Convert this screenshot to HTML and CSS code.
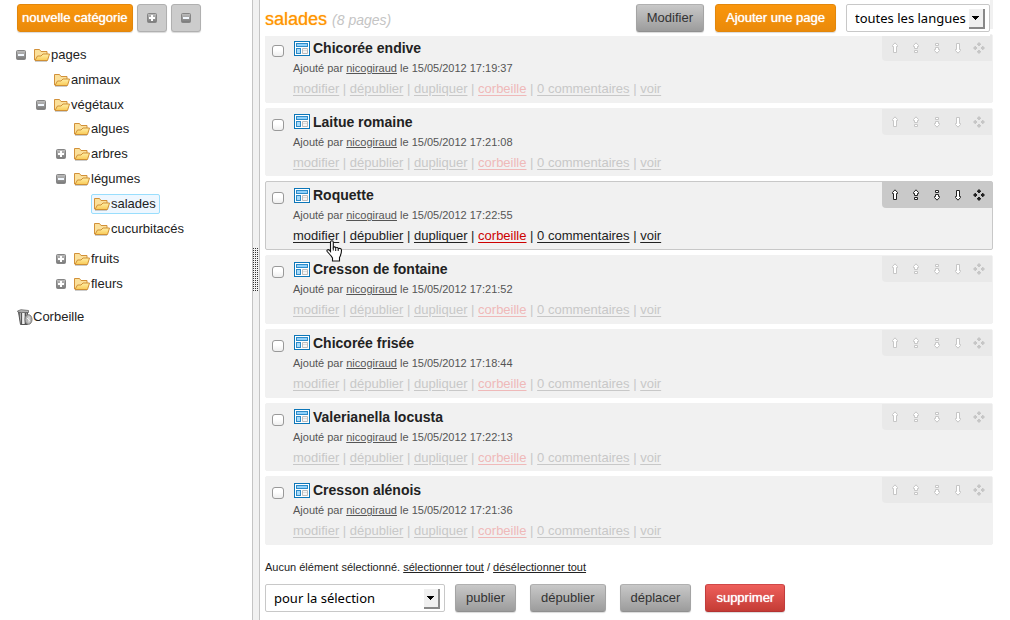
FILE: index.html
```html
<!DOCTYPE html>
<html lang="fr">
<head>
<meta charset="utf-8">
<title>Pages - salades</title>
<link rel="stylesheet" href="styles.css">
</head>
<body>
<svg class="sprite" aria-hidden="true">
  <defs>
    <linearGradient id="g-folder" x1="0" y1="0" x2="0" y2="1"><stop offset="0" stop-color="#fff0a8"/><stop offset="1" stop-color="#f9c955"/></linearGradient>
    <linearGradient id="g-toggle" x1="0" y1="0" x2="0" y2="1"><stop offset="0" stop-color="#c0c0c0"/><stop offset="1" stop-color="#777"/></linearGradient>
    <linearGradient id="g-bin" x1="0" y1="0" x2="1" y2="0"><stop offset="0" stop-color="#444"/><stop offset=".35" stop-color="#eee"/><stop offset="1" stop-color="#888"/></linearGradient>
  </defs>
  <symbol id="folder" viewBox="0 0 16 14">
    <path d="M.5 12V1.500h5l1.500 2h6V6" fill="#fbe09a" stroke="#d2913a"/>
    <path d="M1 12.500 3.500 8H7l2-2h6.500l-2 6.500z" fill="url(#g-folder)" stroke="#cf9036"/>
    <path d="M1 13.500h12" stroke="#aaa" stroke-opacity=".6"/>
  </symbol>
  <symbol id="plus" viewBox="0 0 10 10">
    <rect x=".5" y=".5" width="9" height="9" rx="1" fill="url(#g-toggle)" stroke="#858585"/>
    <path d="M4 2h2v2h2v2H6v2H4V6H2V4h2z" fill="#fff"/>
  </symbol>
  <symbol id="minus" viewBox="0 0 10 10">
    <rect x=".5" y=".5" width="9" height="9" rx="1" fill="url(#g-toggle)" stroke="#858585"/>
    <path d="M2 4h6v2H2z" fill="#f2f8ff"/>
  </symbol>
  <symbol id="bin" viewBox="0 0 16 16">
    <path d="M1.500 3h9v12.500h-7z" fill="url(#g-bin)" stroke="#555"/>
    <path d="M4.500 4v11M8.500 4v11" stroke="#555"/>
    <path d="M6.500 4v11" stroke="#eee"/>
    <path d="M.5 2 4 .7l7.500.8v2L1 3.200z" fill="#bbb" stroke="#555" stroke-width=".7"/>
    <ellipse cx="11.500" cy="10.500" rx="3.500" ry="4.800" fill="#b5b5b5" stroke="#777"/>
    <path d="M12 7.500v6M10 9l3 3" stroke="#eee"/>
  </symbol>
  <symbol id="page" viewBox="0 0 16 15">
    <rect x=".5" y=".5" width="15" height="14" fill="#fff" stroke="#0c76b8"/>
    <rect x="2.500" y="2.500" width="11" height="3" fill="#8fd0fa" stroke="#2d8bc8"/>
    <rect x="2.500" y="7.500" width="4" height="5" fill="#a5dafa" stroke="#2d8bc8"/>
    <path d="M8.500 7.500h5v5h-5z" fill="#f6f6f6" stroke="#bbb"/>
    <path d="M9 9.500h4" stroke="#ddd"/>
  </symbol>
  <symbol id="up" viewBox="0 0 12 12">
    <path d="M6 .8 8.500 3.500v1h-1v6h-3v-6h-1v-1z" fill="#fff" stroke="currentColor"/>
  </symbol>
  <symbol id="top" viewBox="0 0 12 12">
    <path d="M6 .8 8.500 3.500v1h-1v2h-3v-2h-1v-1zM4.500 8.500h3v2h-3z" fill="#fff" stroke="currentColor"/>
  </symbol>
  <symbol id="bottom" viewBox="0 0 12 12">
    <path d="M6 11.200 8.500 8.500v-1h-1v-2h-3v2h-1v1zM4.500 1.500h3v2h-3z" fill="#fff" stroke="currentColor"/>
  </symbol>
  <symbol id="down" viewBox="0 0 12 12">
    <path d="M6 11.200 8.500 8.500v-1h-1v-6h-3v6h-1v1z" fill="#fff" stroke="currentColor"/>
  </symbol>
  <symbol id="move" viewBox="0 0 12 12">
    <path d="M6 0l2 2v1H7v1H5V3H4V2zM6 12l2-2V9H7V8H5v1H4v1zM0 6l2-2h1v1h1v2H3v1H2zM12 6l-2-2H9v1H8v2h1v1h1z" fill="currentColor"/>
  </symbol>
</svg>

<div class="layout">
  <nav class="sidebar" aria-label="Catégories">
    <div class="toolbar">
      <button class="btn btn-orange btn-tight" type="button">nouvelle catégorie</button>
      <button class="btn btn-square" type="button" aria-label="Tout déplier"><svg class="toggle-icon"><use href="#plus"/></svg></button>
      <button class="btn btn-square" type="button" aria-label="Tout replier"><svg class="toggle-icon"><use href="#minus"/></svg></button>
    </div>
    <ul class="tree">
      <li>
        <div class="node"><button class="toggle" type="button" aria-label="Replier pages"><svg class="toggle-icon"><use href="#minus"/></svg></button><a class="label" href="#"><svg class="folder"><use href="#folder"/></svg>pages</a></div>
        <ul>
          <li><div class="node"><a class="label" href="#"><svg class="folder"><use href="#folder"/></svg>animaux</a></div></li>
          <li>
            <div class="node"><button class="toggle" type="button" aria-label="Replier végétaux"><svg class="toggle-icon"><use href="#minus"/></svg></button><a class="label" href="#"><svg class="folder"><use href="#folder"/></svg>végétaux</a></div>
            <ul>
              <li><div class="node"><a class="label" href="#"><svg class="folder"><use href="#folder"/></svg>algues</a></div></li>
              <li><div class="node"><button class="toggle" type="button" aria-label="Déplier arbres"><svg class="toggle-icon"><use href="#plus"/></svg></button><a class="label" href="#"><svg class="folder"><use href="#folder"/></svg>arbres</a></div></li>
              <li>
                <div class="node"><button class="toggle" type="button" aria-label="Replier légumes"><svg class="toggle-icon"><use href="#minus"/></svg></button><a class="label" href="#"><svg class="folder"><use href="#folder"/></svg>légumes</a></div>
                <ul class="leaves">
                  <li><div class="node"><a class="label is-selected" href="#"><svg class="folder"><use href="#folder"/></svg>salades</a></div></li>
                  <li><div class="node"><a class="label" href="#"><svg class="folder"><use href="#folder"/></svg>cucurbitacés</a></div></li>
                </ul>
              </li>
              <li><div class="node"><button class="toggle" type="button" aria-label="Déplier fruits"><svg class="toggle-icon"><use href="#plus"/></svg></button><a class="label" href="#"><svg class="folder"><use href="#folder"/></svg>fruits</a></div></li>
              <li><div class="node"><button class="toggle" type="button" aria-label="Déplier fleurs"><svg class="toggle-icon"><use href="#plus"/></svg></button><a class="label" href="#"><svg class="folder"><use href="#folder"/></svg>fleurs</a></div></li>
            </ul>
          </li>
        </ul>
      </li>
    </ul>
    <a class="trash" href="#"><svg class="bin"><use href="#bin"/></svg>Corbeille</a>
  </nav>

  <div class="splitter"><div class="grip"></div></div>

  <main class="content">
    <header class="head">
      <h1>salades <em>(8 pages)</em></h1>
      <button class="btn btn-grey" type="button">Modifier</button>
      <button class="btn btn-orange" type="button">Ajouter une page</button>
      <span class="select select-lang"><select aria-label="Langue"><option>toutes les langues</option></select></span>
    </header>

    <ul class="items">
      <li class="item">
        <input type="checkbox" id="c1">
        <div class="body">
          <label class="title" for="c1"><svg class="page"><use href="#page"/></svg>Chicorée endive</label>
          <p class="meta">Ajouté par <a href="#">nicogiraud</a> le 15/05/2012 17:19:37</p>
          <p class="links"><a href="#">modifier</a> | <a href="#">dépublier</a> | <a href="#">dupliquer</a> | <a class="bin-link" href="#">corbeille</a> | <a href="#">0 commentaires</a> | <a href="#">voir</a></p>
        </div>
        <div class="order"><button type="button" aria-label="Monter"><svg><use href="#up"/></svg></button><button type="button" aria-label="En haut"><svg><use href="#top"/></svg></button><button type="button" aria-label="En bas"><svg><use href="#bottom"/></svg></button><button type="button" aria-label="Descendre"><svg><use href="#down"/></svg></button><button type="button" aria-label="Déplacer"><svg><use href="#move"/></svg></button></div>
      </li>
      <li class="item">
        <input type="checkbox" id="c2">
        <div class="body">
          <label class="title" for="c2"><svg class="page"><use href="#page"/></svg>Laitue romaine</label>
          <p class="meta">Ajouté par <a href="#">nicogiraud</a> le 15/05/2012 17:21:08</p>
          <p class="links"><a href="#">modifier</a> | <a href="#">dépublier</a> | <a href="#">dupliquer</a> | <a class="bin-link" href="#">corbeille</a> | <a href="#">0 commentaires</a> | <a href="#">voir</a></p>
        </div>
        <div class="order"><button type="button" aria-label="Monter"><svg><use href="#up"/></svg></button><button type="button" aria-label="En haut"><svg><use href="#top"/></svg></button><button type="button" aria-label="En bas"><svg><use href="#bottom"/></svg></button><button type="button" aria-label="Descendre"><svg><use href="#down"/></svg></button><button type="button" aria-label="Déplacer"><svg><use href="#move"/></svg></button></div>
      </li>
      <li class="item is-active">
        <input type="checkbox" id="c3">
        <div class="body">
          <label class="title" for="c3"><svg class="page"><use href="#page"/></svg>Roquette</label>
          <p class="meta">Ajouté par <a href="#">nicogiraud</a> le 15/05/2012 17:22:55</p>
          <p class="links"><a href="#">modifier</a> | <a href="#">dépublier</a> | <a href="#">dupliquer</a> | <a class="bin-link" href="#">corbeille</a> | <a href="#">0 commentaires</a> | <a href="#">voir</a>
            <svg class="pointer" viewBox="0 0 17 22"><path d="M4.500 2.200c0-1.900 2.800-1.900 2.800 0V7.500c.8-1 2.200-.7 2.400.4 1-.8 2.300-.3 2.500.8 1.200-.8 3.300-.2 3.300 1.500 0 3-.7 5-2 7.300v3.500H6.500V18c-1-2-3-3.800-5.300-6.500-1-1.400.8-2.500 2-1.500l1.300 1.500z" fill="#fff" stroke="#111" stroke-width="1.100"/><path d="M7.300 7.500v3M9.700 8.300V11M12.200 9v2" stroke="#111"/></svg></p>
        </div>
        <div class="order"><button type="button" aria-label="Monter"><svg><use href="#up"/></svg></button><button type="button" aria-label="En haut"><svg><use href="#top"/></svg></button><button type="button" aria-label="En bas"><svg><use href="#bottom"/></svg></button><button type="button" aria-label="Descendre"><svg><use href="#down"/></svg></button><button type="button" aria-label="Déplacer"><svg><use href="#move"/></svg></button></div>
      </li>
      <li class="item">
        <input type="checkbox" id="c4">
        <div class="body">
          <label class="title" for="c4"><svg class="page"><use href="#page"/></svg>Cresson de fontaine</label>
          <p class="meta">Ajouté par <a href="#">nicogiraud</a> le 15/05/2012 17:21:52</p>
          <p class="links"><a href="#">modifier</a> | <a href="#">dépublier</a> | <a href="#">dupliquer</a> | <a class="bin-link" href="#">corbeille</a> | <a href="#">0 commentaires</a> | <a href="#">voir</a></p>
        </div>
        <div class="order"><button type="button" aria-label="Monter"><svg><use href="#up"/></svg></button><button type="button" aria-label="En haut"><svg><use href="#top"/></svg></button><button type="button" aria-label="En bas"><svg><use href="#bottom"/></svg></button><button type="button" aria-label="Descendre"><svg><use href="#down"/></svg></button><button type="button" aria-label="Déplacer"><svg><use href="#move"/></svg></button></div>
      </li>
      <li class="item">
        <input type="checkbox" id="c5">
        <div class="body">
          <label class="title" for="c5"><svg class="page"><use href="#page"/></svg>Chicorée frisée</label>
          <p class="meta">Ajouté par <a href="#">nicogiraud</a> le 15/05/2012 17:18:44</p>
          <p class="links"><a href="#">modifier</a> | <a href="#">dépublier</a> | <a href="#">dupliquer</a> | <a class="bin-link" href="#">corbeille</a> | <a href="#">0 commentaires</a> | <a href="#">voir</a></p>
        </div>
        <div class="order"><button type="button" aria-label="Monter"><svg><use href="#up"/></svg></button><button type="button" aria-label="En haut"><svg><use href="#top"/></svg></button><button type="button" aria-label="En bas"><svg><use href="#bottom"/></svg></button><button type="button" aria-label="Descendre"><svg><use href="#down"/></svg></button><button type="button" aria-label="Déplacer"><svg><use href="#move"/></svg></button></div>
      </li>
      <li class="item">
        <input type="checkbox" id="c6">
        <div class="body">
          <label class="title" for="c6"><svg class="page"><use href="#page"/></svg>Valerianella locusta</label>
          <p class="meta">Ajouté par <a href="#">nicogiraud</a> le 15/05/2012 17:22:13</p>
          <p class="links"><a href="#">modifier</a> | <a href="#">dépublier</a> | <a href="#">dupliquer</a> | <a class="bin-link" href="#">corbeille</a> | <a href="#">0 commentaires</a> | <a href="#">voir</a></p>
        </div>
        <div class="order"><button type="button" aria-label="Monter"><svg><use href="#up"/></svg></button><button type="button" aria-label="En haut"><svg><use href="#top"/></svg></button><button type="button" aria-label="En bas"><svg><use href="#bottom"/></svg></button><button type="button" aria-label="Descendre"><svg><use href="#down"/></svg></button><button type="button" aria-label="Déplacer"><svg><use href="#move"/></svg></button></div>
      </li>
      <li class="item">
        <input type="checkbox" id="c7">
        <div class="body">
          <label class="title" for="c7"><svg class="page"><use href="#page"/></svg>Cresson alénois</label>
          <p class="meta">Ajouté par <a href="#">nicogiraud</a> le 15/05/2012 17:21:36</p>
          <p class="links"><a href="#">modifier</a> | <a href="#">dépublier</a> | <a href="#">dupliquer</a> | <a class="bin-link" href="#">corbeille</a> | <a href="#">0 commentaires</a> | <a href="#">voir</a></p>
        </div>
        <div class="order"><button type="button" aria-label="Monter"><svg><use href="#up"/></svg></button><button type="button" aria-label="En haut"><svg><use href="#top"/></svg></button><button type="button" aria-label="En bas"><svg><use href="#bottom"/></svg></button><button type="button" aria-label="Descendre"><svg><use href="#down"/></svg></button><button type="button" aria-label="Déplacer"><svg><use href="#move"/></svg></button></div>
      </li>
    </ul>

    <footer class="foot">
      <p class="status">Aucun élément sélectionné. <a href="#">sélectionner tout</a> / <a href="#">désélectionner tout</a></p>
      <div class="bulk">
        <span class="select select-bulk"><select aria-label="Action groupée"><option>pour la sélection</option></select></span>
        <button class="btn btn-grey" type="button">publier</button>
        <button class="btn btn-grey" type="button">dépublier</button>
        <button class="btn btn-grey" type="button">déplacer</button>
        <button class="btn btn-red" type="button">supprimer</button>
      </div>
    </footer>
  </main>
</div>
</body>
</html>
```
FILE: styles.css
```css
* { box-sizing: border-box; }
body { margin: 0; background: #fff; color: #222; font: 13px/20px "Liberation Sans", Arial, sans-serif; }
ul { margin: 0; padding: 0; list-style: none; }
p, h1 { margin: 0; }
svg { display: block; flex: none; }
button, select { font-family: inherit; }
.sprite { position: absolute; width: 0; height: 0; }

.layout { display: grid; grid-template-columns: 252px 8px minmax(0, 1fr); min-height: 100vh; }

.btn {
  height: 28px; padding: 0 10px; border: 1px solid; border-radius: 3px;
  font-size: 13px; line-height: 20px; white-space: nowrap;
  box-shadow: 0 1px 1px rgba(0, 0, 0, .15);
}
.btn-tight { padding: 0 4px; }
.btn-orange { color: #fff; border-color: #e2870c; background: linear-gradient(#fa960c, #ea8a0a); text-shadow: 0 0 1px #fff; }
.btn-grey { color: #333; border-color: #b0b0b0 #a4a4a4 #909090; background: linear-gradient(#c8c8c8, #9c9c9c); }
.btn-red { color: #fff; border-color: #d04848 #c23c3c #b43232; background: linear-gradient(#ee5f5b, #c43c35); text-shadow: 0 0 1px #fff; }
.btn-square { width: 30px; padding: 0; display: grid; place-items: center; border-color: #b0b0b0; background: #ccc; }

/* Category tree */
.toolbar { display: flex; gap: 4px; padding: 4px 0 10px 17px; }
.toggle-icon { width: 10px; height: 10px; }
.tree { padding-left: 16px; }
.tree ul { padding-left: 20px; }
.tree ul ul { margin-top: -1px; }
.tree .leaves { margin: 0 0 5px; }
.node { display: flex; align-items: center; height: 25px; padding-left: 15px; }
.toggle { width: 10px; height: 10px; margin: 0 5px 0 -15px; padding: 0; border: 0; background: none; }
.label { display: flex; align-items: center; gap: 1px; height: 20px; padding: 0 3px 0 2px; border: 1px solid transparent; border-radius: 2px; color: #222; text-decoration: none; }
.label.is-selected { background: #eef7ff; border-color: #99defd; }
.folder { width: 16px; height: 14px; }
.trash { display: inline-flex; align-items: center; margin: 11px 0 0 17px; color: #222; text-decoration: none; }
.bin { width: 16px; height: 16px; }

.splitter { display: grid; align-items: center; justify-content: center; padding-bottom: 80px; border: solid #c4c4c4; border-width: 0 1px; background: #f1f1f1; }
.grip { width: 6px; height: 44px; background: conic-gradient(transparent 75%, #333 0) 0 0 / 2px 2px; }

/* Page list */
.content { display: flex; flex-direction: column; padding: 0 17px 8px 5px; }
.head { position: relative; z-index: 1; display: flex; align-items: center; gap: 10px; height: 36px; margin-right: 3px; background: #fff; }
.head .btn-grey { margin-right: 1px; }
.head::after { content: ""; position: absolute; left: 100%; top: 0; width: 3px; height: 29px; background: #f1f1f1; }
h1 { flex: 1; padding-top: 2px; color: #ff9500; font-size: 18px; font-weight: 400; line-height: 24px; text-shadow: 0 0 1px #ffb550; }
h1 em { color: #c4c4c4; font-size: 14px; text-shadow: none; }

.items { display: grid; grid-auto-rows: 1fr; gap: 5px; flex: 1; margin-top: -2px; }
.item { display: flex; align-items: flex-start; border: 1px solid #f1f1f1; border-radius: 2px; background: #f1f1f1; }
.item input { appearance: none; width: 12px; height: 12px; margin: 10px 9px 0 6px; border: 1px solid #999; border-radius: 3px; background: linear-gradient(#fff 40%, #eee); }
.body { flex: 1; }
.title { display: flex; align-items: center; gap: 3px; padding: 3px 0 0 1px; font-size: 14px; font-weight: 700; line-height: 20px; }
.page { width: 16px; height: 15px; }
.meta { font-size: 11px; color: #555; }
.meta a { color: inherit; }
.links { position: relative; line-height: 22px; color: #c8c8c8; }
.links a { color: inherit; text-underline-offset: 2px; }
.links .bin-link { color: #efb9b9; }
.pointer { position: absolute; left: 33px; top: 15px; width: 17px; height: 22px; z-index: 1; }
.order { display: flex; padding: 0 3px 0 2px; border-radius: 0 0 0 4px; background: #e9e9e9; color: #c6c6c6; }
.order button { display: grid; place-items: center; width: 21px; height: 26px; padding: 0; border: 0; background: none; color: inherit; }
.order svg { width: 12px; height: 12px; }

.is-active { border-color: #c8c8c8; }
.is-active .links { color: #222; }
.is-active .links .bin-link { color: #c00; }
.is-active .order { background: #c9c9c9; color: #222; }

/* Bulk actions */
.foot { padding-top: 12px; }
.status { font-size: 11px; }
.status a { color: inherit; }
.bulk { display: flex; gap: 14px; padding-top: 7px; }
.bulk .select { margin-right: -4px; }

.select { position: relative; display: block; }
.select select {
  appearance: none; width: 100%; height: 28px; padding: 0 8px; border: 1px solid #c8c8c8; border-radius: 2px;
  background: #fff; color: #000; font: 13px/20px "Noto Sans", sans-serif;
}
/* Drop-down arrow, stacked from one-pixel bars */
.select::after {
  content: ""; position: absolute; right: 5px; top: 5px; width: 14px; height: 18px; pointer-events: none;
  border: solid #888; border-width: 0 2px 2px 0;
  background:
    linear-gradient(#000, #000) 3px 7px / 7px 1px no-repeat,
    linear-gradient(#000, #000) 4px 8px / 5px 1px no-repeat,
    linear-gradient(#000, #000) 5px 9px / 3px 1px no-repeat,
    linear-gradient(#000, #000) 6px 10px / 1px 1px no-repeat,
    #f0f0f0;
}
.select-lang { width: 144px; }
.select-bulk { width: 180px; }
```
